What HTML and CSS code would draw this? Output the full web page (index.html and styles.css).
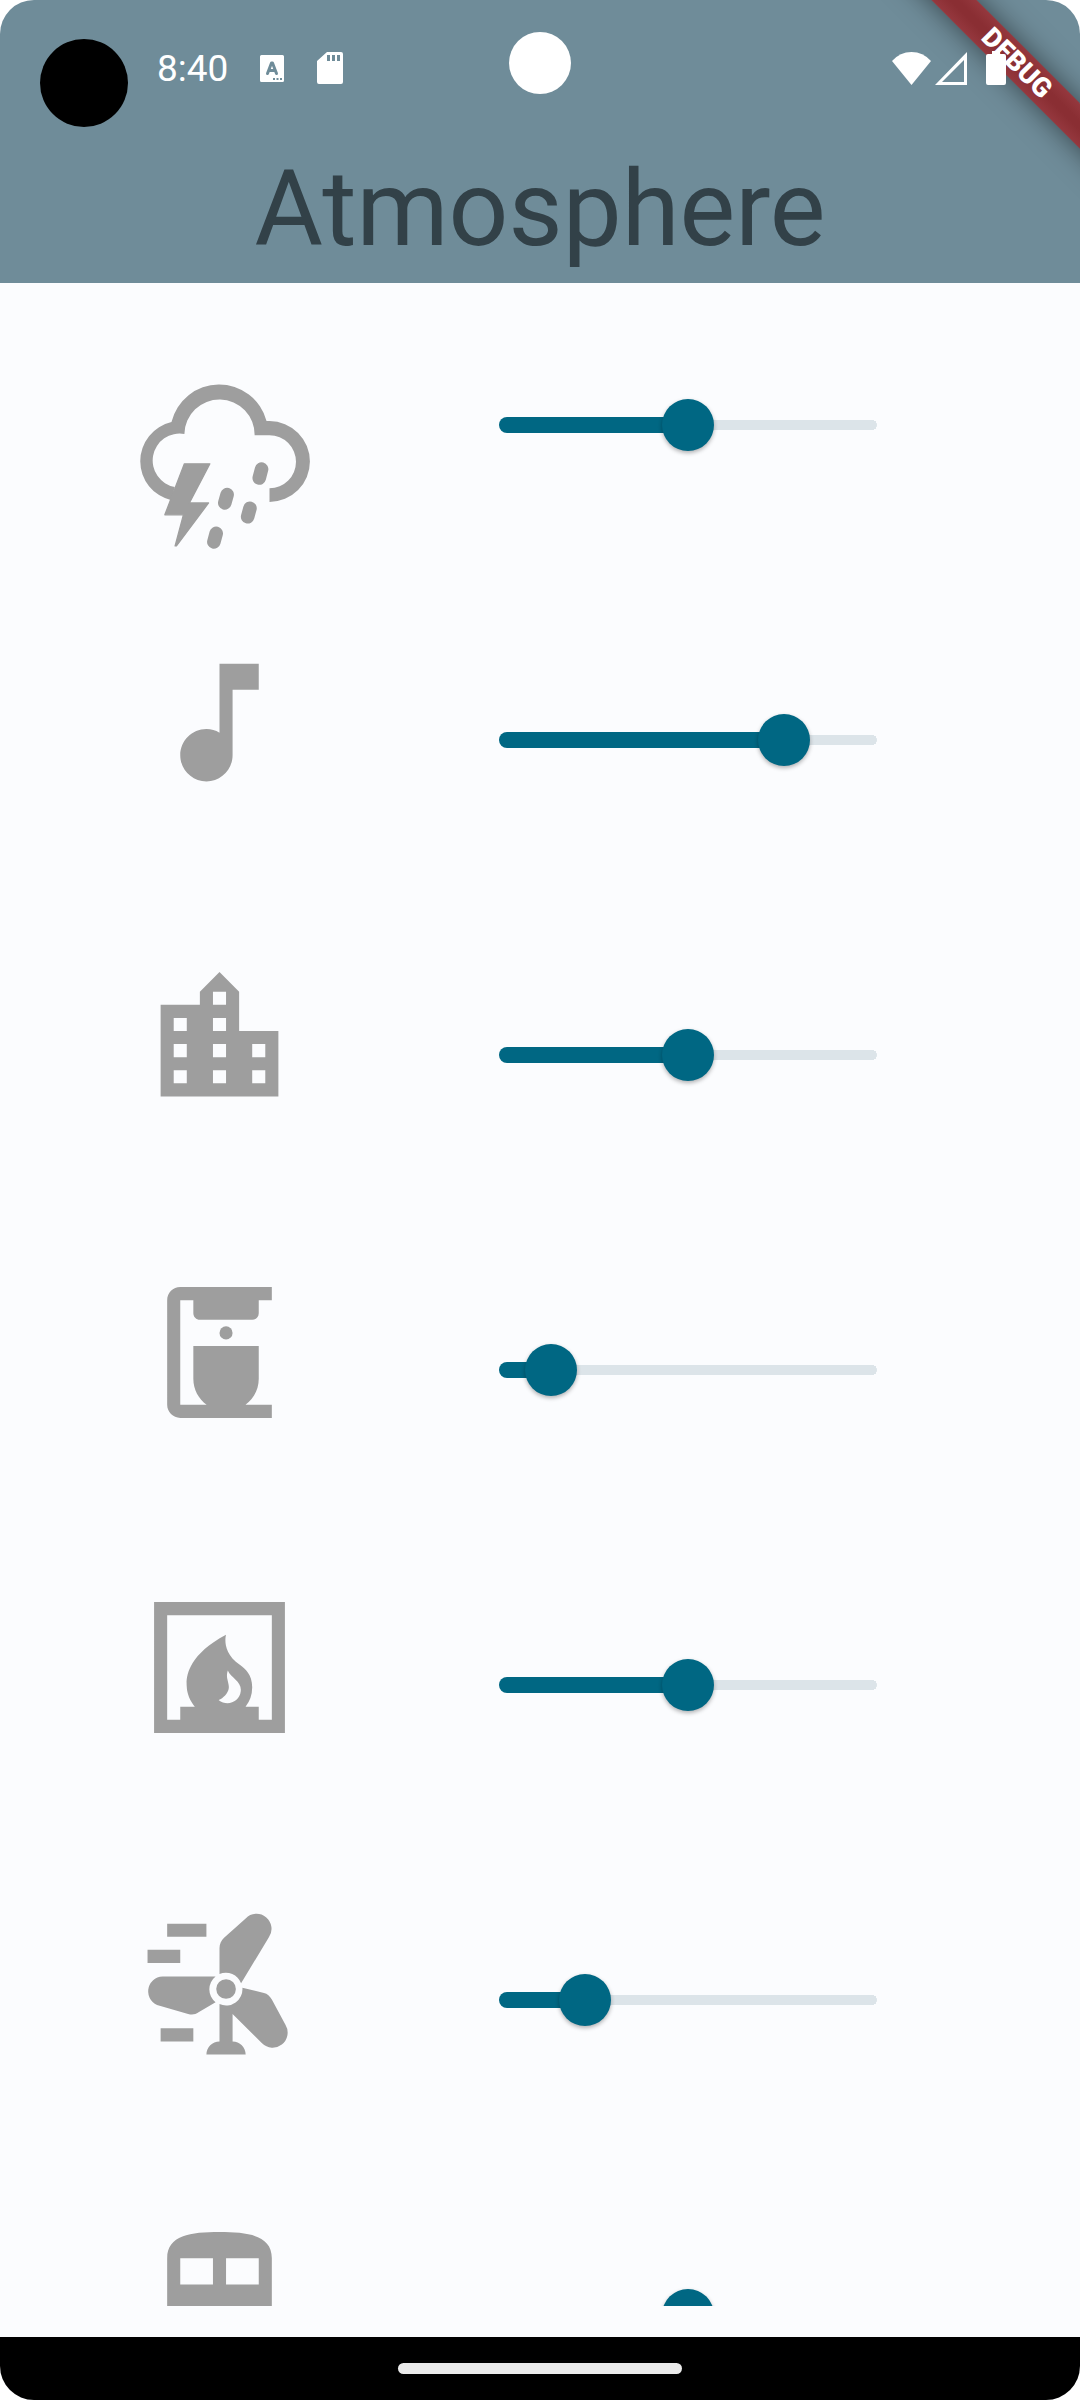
FILE: index.html
```html
<!DOCTYPE html>
<html lang="en">
<head>
<meta charset="utf-8">
<meta name="viewport" content="width=device-width, initial-scale=1">
<title>Atmosphere</title>
<link rel="stylesheet" href="styles.css">
</head>
<body>
<div class="screen">
  <header class="app-bar">
    <div class="status-bar">
      <div class="status-left">
        <span class="clock">8:40</span>
        <svg class="status-icon-keyboard" viewBox="0 0 24 27" aria-hidden="true">
          <path fill="#fff" fill-rule="evenodd" d="M1.500 0h21q1.500 0 1.500 1.500v24q0 1.500-1.500 1.500h-21q-1.500 0-1.500-1.500v-24q0-1.500 1.500-1.500zM13 23v2h2v-2zm3.500 0v2h2v-2zm3.500 0v2h2v-2z"/>
          <path fill="none" stroke="#6f8c99" stroke-width="3" stroke-linecap="round" stroke-linejoin="round" d="M7.500 18.500L11.500 8h1L16.500 18.500M9 15.500h6"/>
        </svg>
        <svg class="status-icon-card" viewBox="0 0 26 32" aria-hidden="true">
          <path fill="#fff" fill-rule="evenodd" d="M10 0h14q2 0 2 2v28q0 2-2 2H2q-2 0-2-2V9zM10 3v6h3V3zm5 0v6h3V3zm5 0v6h3V3z"/>
        </svg>
      </div>
      <div class="status-right">
        <svg class="status-icon-wifi" viewBox="0 0 39 33" aria-hidden="true"><path fill="#fff" d="M0 9Q8 0 19.500 0T39 9L19.500 33z"/></svg>
        <svg class="status-icon-signal" viewBox="0 0 32 33" aria-hidden="true"><path fill="#fff" fill-rule="evenodd" d="M32 0v33H0zM29 8L7 30h22z"/></svg>
        <svg class="status-icon-battery" viewBox="0 0 20 34" aria-hidden="true"><path fill="#fff" d="M6 0h8v3h4q2 0 2 2v27q0 2-2 2H2q-2 0-2-2V5q0-2 2-2h4z"/></svg>
      </div>
    </div>
    <h1 class="title">Atmosphere</h1>
    <span class="recording-dot"></span>
    <span class="camera-dot"></span>
    <div class="banner-corner"><span class="banner">DEBUG</span></div>
  </header>

  <main class="sounds">
    <div class="sound">
      <button class="sound-icon" type="button" aria-label="Thunderstorm">
        <svg viewBox="0 0 474 474"><g transform="translate(-63 93)" fill="#9e9e9e">
          <path d="M155 424A121 121 0 0 1 155 188A148 148 0 0 1 442 185H451A122 122 0 0 1 451 429V388A80 80 0 0 0 451 228H406A106 106 0 0 0 194 224A81 81 0 0 0 165 384z"/>
          <path stroke="#9e9e9e" stroke-width="4" stroke-linejoin="round" d="M194 314H271L209 432H267L170 562H166L191 468H135z"/>
          <path fill="none" stroke="#9e9e9e" stroke-width="41" stroke-linecap="round" d="M427 330L420 357M323 407L316 432M392 448L385 474M290 524L283 550"/>
        </g></svg>
      </button>
      <input class="slider" type="range" min="0" max="100" step="0.5" value="50" aria-label="Thunderstorm volume" style="--level: 0.5">
    </div>
    <div class="sound">
      <button class="sound-icon" type="button" aria-label="Music">
        <svg viewBox="0 0 24 24"><path d="M12 3v10.550c-.59-.34-1.270-.55-2-.55-2.210 0-4 1.790-4 4s1.790 4 4 4 4-1.790 4-4V7h4V3z"/></svg>
      </button>
      <input class="slider" type="range" min="0" max="100" step="0.5" value="79.5" aria-label="Music volume" style="--level: 0.795">
    </div>
    <div class="sound">
      <button class="sound-icon" type="button" aria-label="City">
        <svg viewBox="0 0 24 24"><path fill-rule="evenodd" d="M15 11V5l-3-3-3 3v2H3v14h18V11zM5 9h2v2H5zm0 4h2v2H5zm0 4h2v2H5zM11 5h2v2h-2zm0 4h2v2h-2zm0 4h2v2h-2zm0 4h2v2h-2zM17 13h2v2h-2zm0 4h2v2h-2z"/></svg>
      </button>
      <input class="slider" type="range" min="0" max="100" step="0.5" value="50" aria-label="City volume" style="--level: 0.5">
    </div>
    <div class="sound">
      <button class="sound-icon" type="button" aria-label="Coffee maker">
        <svg viewBox="0 0 24 24"><path d="M18 6V4h2V2H6c-1.100 0-2 .9-2 2v16c0 1.100.9 2 2 2h14v-2h-4.030c1.230-.91 2.030-2.360 2.030-4v-5H8v5c0 1.640.81 3.090 2.030 4H6V4h2v2c0 .55.45 1 1 1h8c.55 0 1-.45 1-1z"/><circle cx="13" cy="9" r="1"/></svg>
      </button>
      <input class="slider" type="range" min="0" max="100" step="0.5" value="8" aria-label="Coffee maker volume" style="--level: 0.08">
    </div>
    <div class="sound">
      <button class="sound-icon" type="button" aria-label="Fireplace">
        <svg viewBox="0 0 24 24"><path d="M2 2v20h20V2H2zm9.860 14.960c.76-.24 1.400-1.040 1.530-1.630.13-.56-.1-1.050-.2-1.600-.08-.46-.07-.85.08-1.280.54 1.210 2.150 1.640 1.980 3.180-.19 1.690-2.110 2.370-3.390 1.330zM20 20h-2v-2h-2.020A4.980 4.980 0 0 0 17 15c0-1.890-1.090-2.850-1.850-3.370C12.200 9.610 13 7 13 7c-6.730 3.570-6.020 7.470-6 8 .03.96.49 2.070 1.230 3H6v2H4V4h16v16z"/></svg>
      </button>
      <input class="slider" type="range" min="0" max="100" step="0.5" value="50" aria-label="Fireplace volume" style="--level: 0.5">
    </div>
    <div class="sound">
      <button class="sound-icon" type="button" aria-label="Wind">
        <svg viewBox="0 0 24 24">
          <path d="M4 3h6v2H4zM1 7h5v2H1zM3 19h5v2H3z"/><circle cx="13" cy="13" r="1.500"/>
          <path d="M12 10.700V6.750c0-.6.25-1.150.7-1.600L16 2.200A2.300 2.300 0 0 1 19.550 5.100L15.300 12.100A2.500 2.500 0 0 0 12 10.700z"/>
          <path d="M11.400 11.070H3.300A2.270 2.270 0 0 0 2.850 15.550L7.200 16.800C7.800 16.950 8.300 16.900 8.800 16.550L11.400 15A2.500 2.500 0 0 1 11.400 11.070z"/>
          <path d="M15.500 12.800L18.800 13.600C19.300 13.700 19.700 14.100 20 14.600L22.100 18.500A2.300 2.300 0 0 1 18.500 21.300L14 16.800V21c1.100 0 2 .9 2 2h-6c0-1.100.9-2 2-2V15.300A2.500 2.500 0 0 0 15.500 12.800z"/>
        </svg>
      </button>
      <input class="slider" type="range" min="0" max="100" step="0.5" value="18.5" aria-label="Wind volume" style="--level: 0.185">
    </div>
    <div class="sound">
      <button class="sound-icon" type="button" aria-label="Train">
        <svg viewBox="0 0 24 24"><path fill-rule="evenodd" d="M12 2c-4.420 0-8 .5-8 4v9.500C4 17.430 5.570 19 7.500 19L6 20.500v.5h12v-.5L16.500 19c1.930 0 3.500-1.570 3.500-3.500V6c0-3.500-3.580-4-8-4zM6 6h5v4H6zM13 6h5v4h-5z"/></svg>
      </button>
      <input class="slider" type="range" min="0" max="100" step="0.5" value="50" aria-label="Train volume" style="--level: 0.5">
    </div>
  </main>

  <footer class="nav-bar"><span class="nav-handle"></span></footer>
</div>
</body>
</html>
```
FILE: styles.css
```css
* {
  box-sizing: border-box;
}

body {
  margin: 0;
  background: #fff;
  font-family: Roboto, "Liberation Sans", sans-serif;
}

svg {
  display: block;
}

.screen {
  display: flex;
  flex-direction: column;
  height: 100vh;
  overflow: hidden;
  border-radius: 34px;
  background: #fbfcfe;
}

/* App bar with the system status row */

.app-bar {
  position: relative;
  flex: none;
  background: #6f8c99;
}

.status-bar {
  position: relative;
  z-index: 2;
  display: flex;
  justify-content: space-between;
  align-items: center;
  height: 136px;
  padding: 0 74px 0 157px;
}

.status-left,
.status-right {
  display: flex;
  align-items: center;
}

.clock {
  width: 103px;
  padding-top: 2px;
  color: #fff;
  font-size: 37px;
  line-height: 44px;
}

.status-icon-keyboard {
  width: 24px;
  height: 27px;
  margin-right: 33px;
}

.status-icon-card {
  width: 26px;
  height: 32px;
}

.status-icon-wifi {
  width: 39px;
  height: 33px;
  margin-right: 4px;
}

.status-icon-signal {
  width: 32px;
  height: 33px;
  margin-right: 19px;
}

.status-icon-battery {
  width: 20px;
  height: 34px;
}

.title {
  margin: 0;
  padding: 12px 0;
  color: #324148;
  font-size: 105px;
  font-weight: 400;
  line-height: 123px;
  text-align: center;
}

.recording-dot {
  position: absolute;
  top: 39px;
  left: 40px;
  width: 88px;
  height: 88px;
  border-radius: 50%;
  background: #000;
}

.camera-dot {
  position: absolute;
  top: 32px;
  left: calc(50% - 31px);
  width: 62px;
  height: 62px;
  border-radius: 50%;
  background: #fff;
}

.banner-corner {
  position: absolute;
  top: 0;
  right: 0;
  width: 200px;
  height: 200px;
  overflow: hidden;
}

.banner {
  position: absolute;
  top: 47px;
  left: -13px;
  width: 300px;
  height: 32px;
  background: linear-gradient(#95383e, #8a2e33 40%, #8a2e33 60%, #95383e);
  box-shadow: 0 0 28px rgba(0, 0, 0, 0.5);
  color: #fff;
  font-size: 27px;
  font-weight: 900;
  line-height: 32px;
  text-align: center;
  transform: rotate(45deg);
}

/* Scrolling list of sounds */

.sounds {
  flex: 1;
  min-height: 0;
  margin-bottom: 31px;
  overflow-y: auto;
  scrollbar-width: none;
}

.sound {
  display: grid;
  grid-template-columns: 158px 1fr;
  column-gap: 200px;
  align-items: start;
  height: 315px;
  padding: 46px 203px 0 141px;
}

.sound-icon {
  width: 157px;
  height: 157px;
  padding: 0;
  border: 0;
  background: none;
}

.sound-icon svg {
  width: 157px;
  height: 157px;
  overflow: visible;
  fill: #9e9e9e;
}

.slider {
  appearance: none;
  width: 100%;
  height: 52px;
  margin: 70px 0 0;
  background: none;
}

.slider::-webkit-slider-runnable-track {
  height: 16px;
  border-radius: 8px;
  background:
    linear-gradient(#006783, #006783) left / calc(26px + (100% - 52px) * var(--level)) 16px no-repeat,
    radial-gradient(circle, #dce4e9 5px, transparent 5px) right / 10px 10px no-repeat,
    linear-gradient(to left, transparent 5px, #dce4e9 5px) right / 100% 10px no-repeat;
}

.slider::-webkit-slider-thumb {
  appearance: none;
  width: 52px;
  height: 52px;
  margin-top: -18px;
  border-radius: 50%;
  background: #006783;
  box-shadow: 0 2px 4px rgba(0, 0, 0, 0.3);
}

/* Gesture navigation */

.nav-bar {
  display: flex;
  flex: none;
  justify-content: center;
  align-items: center;
  height: 63px;
  background: #000;
}

.nav-handle {
  width: 284px;
  height: 11px;
  border-radius: 6px;
  background: #ebebeb;
}
```
